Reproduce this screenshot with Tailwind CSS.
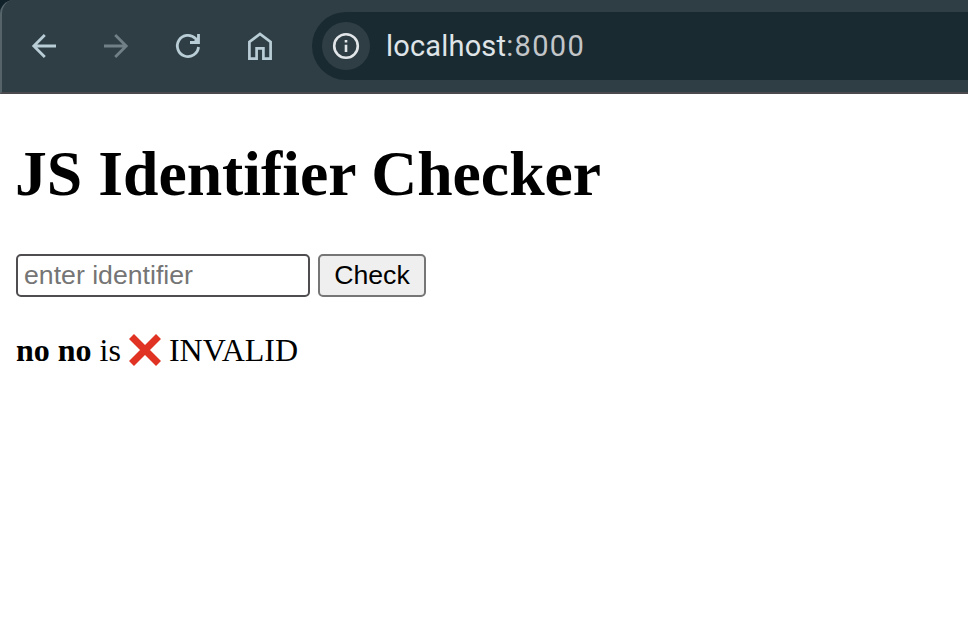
<!DOCTYPE html>
<html lang="en">
<head>
<meta charset="utf-8">
<title>JS Identifier Checker</title>
<script src="https://cdn.jsdelivr.net/npm/@tailwindcss/browser@4"></script>
</head>
<body class="h-screen overflow-hidden bg-white text-black">
<header class="h-[94px] bg-[#10212a]">
  <div class="flex h-full items-center rounded-tl-[14px] border-b-2 border-b-[#4a494d] border-l-2 border-l-[#56646a] bg-[#2f3e45] pl-[26px]">
    <nav class="flex gap-10 text-[#b9cdd6]">
      <svg class="size-8" viewBox="0 0 32 32" fill="none" stroke="currentColor" stroke-width="2.8"><path d="M28 16H6M16.800 5 5.800 16l11 11"/></svg>
      <svg class="size-8 text-[#718086]" viewBox="0 0 32 32" fill="none" stroke="currentColor" stroke-width="2.8"><path d="M4 16h22M15.200 5l11 11-11 11"/></svg>
      <svg class="size-8" viewBox="0 0 32 32" fill="none" stroke="currentColor" stroke-width="2.8"><path d="M26.500 17A10.600 10.600 0 1 1 23.500 8.500L26.500 11.500M26.500 4v8.500H18"/><path fill="currentColor" stroke="none" d="M26 7v6h-6Z"/></svg>
      <svg class="size-8" viewBox="0 0 32 32" fill="none" stroke="currentColor" stroke-width="2.7"><path d="M5.400 28.600V12L16 4l10.600 8V28.600h-7.200V18.400h-6.800V28.600Z"/></svg>
    </nav>
    <div class="ml-9 flex h-[68px] flex-1 items-center rounded-l-full bg-[#1a2a31] pl-2.5">
      <div class="flex size-12 items-center justify-center rounded-full bg-[#2f3e45]">
        <svg class="size-7 text-[#e2e6e9]" viewBox="0 0 28 28" fill="none" stroke="currentColor" stroke-width="2.6"><circle cx="14" cy="14" r="11.800"/><path d="M14 12.800v7.200M14 8v2.600"/></svg>
      </div>
      <div class="ml-4 whitespace-nowrap font-[Roboto,sans-serif] text-[29px] leading-8 tracking-[0.18px] text-[#dfe4e8]">localhost<span class="tracking-[1.35px] text-[#c3c6c9]">:8000</span></div>
    </div>
  </div>
</header>
<main class="px-4 pt-[43px] font-['Liberation_Serif',serif]">
  <h1 class="-ml-px text-[63.7px] font-bold leading-[74px]">JS Identifier Checker</h1>
  <form class="mt-[43px] flex gap-2 font-['Liberation_Sans',sans-serif] text-[26.67px]">
    <input type="text" placeholder="enter identifier" class="h-[43px] w-[294px] rounded-[5px] border-2 border-[#4f4d4f] px-1.5 placeholder:text-[#757575]">
    <button type="button" class="h-[43px] w-[108px] rounded-[5px] border-2 border-[#767676] bg-[#efefef] pb-px leading-8">Check</button>
  </form>
  <p class="mt-[35px] flex items-center text-[32px] leading-9"><span class="whitespace-pre"><b>no no</b> is </span><svg class="size-8" viewBox="0 0 32 32" role="img" aria-label="Cross mark"><path stroke="#e03323" stroke-width="7" d="M2.500 2.500l27 27M29.500 2.500l-27 27"/></svg><span class="ml-2">INVALID</span></p>
</main>
</body>
</html>
